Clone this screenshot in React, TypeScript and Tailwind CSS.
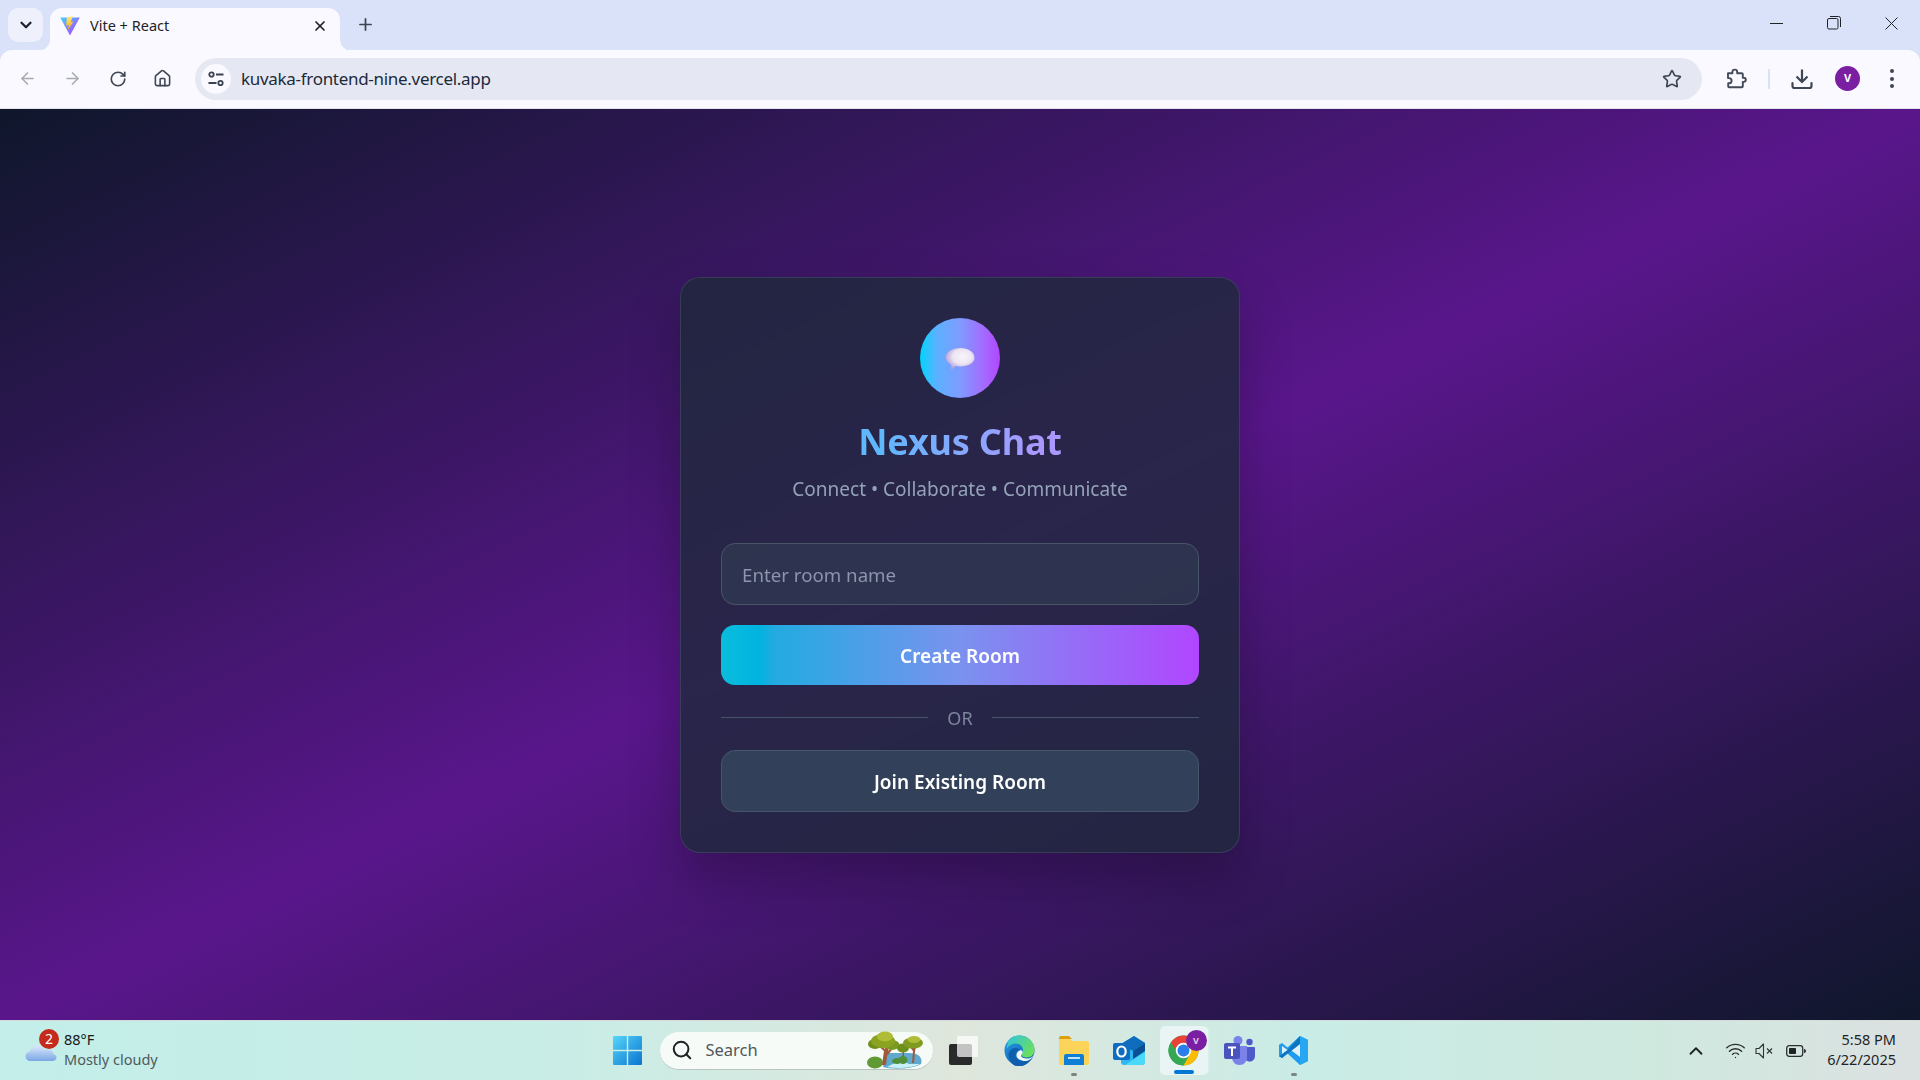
import React from "react";
import { ArrowLeft, ArrowRight, RotateCw, House, Star, X, Plus, ChevronDown, ChevronUp, Wifi, Search } from "lucide-react";

const ui = { fontFamily: '"Noto Sans", "Open Sans", sans-serif' };

function ViteIcon() {
  return (
    <svg width="20" height="20" viewBox="0 0 20 20">
      <defs>
        <linearGradient id="vg" x1="0" y1="0" x2="1" y2="1">
          <stop offset="0" stopColor="#41d1ff" />
          <stop offset="1" stopColor="#bd34fe" />
        </linearGradient>
        <linearGradient id="vb" x1="0" y1="0" x2="0" y2="1">
          <stop offset="0" stopColor="#ffea83" />
          <stop offset="1" stopColor="#ffa800" />
        </linearGradient>
      </defs>
      <path d="M0.2 1.5 L19.8 1.5 L10 19.5 Z" fill="url(#vg)" />
      <path d="M12.8 0 L6.8 1.6 L6.2 9.5 L8.8 9 L7.8 14 L13.5 5.5 L10.8 6 Z" fill="url(#vb)" />
    </svg>
  );
}

function TuneIcon() {
  return (
    <svg width="18" height="18" viewBox="0 0 18 18" fill="none" stroke="#3c4350" strokeWidth="1.8">
      <circle cx="4.5" cy="4.5" r="2.2" />
      <path d="M9 4.5h7.5M1.5 13h8" />
      <circle cx="13.5" cy="13" r="2.2" />
    </svg>
  );
}

function PuzzleIcon() {
  return (
    <svg width="21" height="21" viewBox="0 0 21 21" fill="none" stroke="#444a57" strokeWidth="1.9" strokeLinejoin="round">
      <path d="M2 5.2h4.4V4a2.4 2.4 0 0 1 4.8 0v1.2h4.6a1 1 0 0 1 1 1v3.5h.9a2.1 2.1 0 0 1 0 4.2h-.9v4.4a1 1 0 0 1-1 1H3.2a1 1 0 0 1-1-1v-3h.8a2.6 2.6 0 0 0 0-5.2h-1V5.2Z" />
    </svg>
  );
}

function DownloadIcon() {
  return (
    <svg width="22" height="22" viewBox="0 0 22 22" fill="none" stroke="#3f4654" strokeWidth="2.2">
      <path d="M11 1.5v12M5.5 8.5 11 14l5.500-5.500" />
      <path d="M1.500 15v3a2 2 0 0 0 2 2h15a2 2 0 0 0 2-2v-3" strokeLinecap="round" />
    </svg>
  );
}

function Bubble() {
  return (
    <svg width="30" height="24" viewBox="0 0 30 24">
      <defs>
        <radialGradient id="bub" cx="0.58" cy="0.4" r="0.6">
          <stop offset="0" stopColor="#f8f4fb" />
          <stop offset="0.55" stopColor="#ece5f3" />
          <stop offset="1" stopColor="#b8a0d8" />
        </radialGradient>
      </defs>
      <path d="M15.500 1C23 1 29.500 5 29.500 10.500C29.500 15.800 23.500 19.500 15.500 19.500C13.500 19.500 11.800 19.300 10.300 18.800C9.300 20.300 7.800 22 6.300 22.800C6.200 21 6.200 19 6 17.300C2.800 15.600 .7 13.300 .7 10.500C.7 5 8 1 15.500 1Z" fill="url(#bub)" />
    </svg>
  );
}

function Weather() {
  return (
    <div className="relative w-[39px] h-[44px] -mt-[4px]">
      <svg className="absolute left-0 top-[10px]" width="32" height="26" viewBox="0 0 32 26">
        <defs>
          <linearGradient id="cl" x1="0" y1="0" x2="0" y2="1">
            <stop offset="0" stopColor="#dbe8fa" />
            <stop offset="1" stopColor="#7ba7e6" />
          </linearGradient>
        </defs>
        <path d="M25 4 l4 5 -5 3Z" fill="#f0962a" />
        <path d="M6 24c-3.500 0-5.500-2.200-5.500-4.800 0-2.500 1.900-4.400 4.500-4.600C5.700 11 8.800 8.500 12.500 8.500c3.300 0 6 1.800 7 4.500 1-.5 2-.7 3-.7 3 0 5.400 1.900 6 4.600 1.800.4 3 1.800 3 3.500 0 2-1.700 3.600-4 3.600Z" fill="url(#cl)" />
      </svg>
      <div className="absolute left-[14px] top-[2px] w-[20px] h-[20px] rounded-full bg-[#c42b1c] text-white text-[14px] leading-[20px] text-center">2</div>
    </div>
  );
}

function WinLogo() {
  return (
    <svg width="29" height="29" viewBox="0 0 29 29">
      <defs>
        <linearGradient id="win" x1="0" y1="0" x2="1" y2="1">
          <stop offset="0" stopColor="#55d6fb" />
          <stop offset="1" stopColor="#0a74d0" />
        </linearGradient>
      </defs>
      <path d="M1 0h12.800v13.800H0V1a1 1 0 0 1 1-1ZM15.200 0H28a1 1 0 0 1 1 1v12.800H15.200ZM0 15.200h13.800V29H1a1 1 0 0 1-1-1ZM15.200 15.200H29V28a1 1 0 0 1-1 1H15.200Z" fill="url(#win)" />
    </svg>
  );
}

function Trees() {
  return (
    <svg width="56" height="38" viewBox="0 0 56 38">
      <path d="M16 36c10 3 30 2 38-3 2-6-2-11-12-11H18Z" fill="#5fa9cf" />
      <path d="M20 36c7-4 15-7 22-3l11 0c-8 4-21 5-33 3Z" fill="#c9f0f4" />
      <ellipse cx="8" cy="31.500" rx="8" ry="6" fill="#5f9a34" />
      <ellipse cx="30" cy="30" rx="5" ry="3" fill="#4f8f3a" />
      <path d="M15 34 17 20 10 14l2-1 6 5 3-8h2l-2 10 6-6 1 1-8 10-1 9Z" fill="#a0573a" />
      <ellipse cx="8" cy="13" rx="7" ry="5" fill="#6f8f1c" />
      <ellipse cx="25" cy="14" rx="7.500" ry="5" fill="#7b9a1e" />
      <ellipse cx="16" cy="10" rx="12" ry="7" fill="#8aa421" />
      <ellipse cx="18" cy="5.500" rx="8" ry="5" fill="#aebd35" />
      <path d="M45 32 46 20l-5-6 1-1 5 4 2-5h1l-2 8-1 12Z" fill="#a0573a" />
      <path d="M35.500 31V20h1.500v11Z" fill="#a0573a" />
      <ellipse cx="36" cy="29" rx="4.500" ry="4" fill="#4f8f3a" />
      <ellipse cx="36" cy="17" rx="6" ry="4.500" fill="#6f8f1c" />
      <ellipse cx="46" cy="12" rx="10" ry="5.500" fill="#7f9b20" />
      <ellipse cx="47" cy="8.500" rx="6.500" ry="3.500" fill="#aebd35" />
    </svg>
  );
}

function TaskView() {
  return (
    <svg width="29" height="29" viewBox="0 0 29 29">
      <rect x="0" y="8" width="23" height="21" rx="2" fill="#2a2a2a" />
      <rect x="8" y="0" width="22" height="21" rx="2" fill="#ffffff" fillOpacity="0.72" />
    </svg>
  );
}

function Edge() {
  return (
    <svg width="31" height="31" viewBox="0 0 31 31">
      <defs>
        <linearGradient id="eg" x1="0" y1="0" x2="1" y2="0.6">
          <stop offset="0" stopColor="#2fc2e0" />
          <stop offset="1" stopColor="#6bdf5f" />
        </linearGradient>
        <linearGradient id="eb" x1="0" y1="0" x2="0.6" y2="1">
          <stop offset="0" stopColor="#2a9fe6" />
          <stop offset="1" stopColor="#0b5fb5" />
        </linearGradient>
      </defs>
      <circle cx="15.500" cy="15.500" r="15" fill="url(#eb)" />
      <path d="M3 8C6 2.500 11 .5 15.500.5 24 .5 30.500 7 30.500 15c0 4-3 7.500-7.500 7.500-3.500 0-6-1.500-6-3 0-1 2-1.500 2-4.500 0-3.500-3-6.500-7-6.500-4 0-7.500 2-9 5-.3-2 .0-4 1-5.500Z" fill="url(#eg)" />
      <path d="M12 31c-4-1-7.500-6-7.500-11 0-3.500 3-7 7-7 2.500 0 4 1 4.500 2-3 .5-4.500 2.500-4.500 5 0 4 4 6.500 8 6.500 3.500 0 5.500-1 7.500-2.500-3 5-7.500 7.500-11.500 7.500Z" fill="#0f5fae" />
      <path d="M12.500 20.500c0-3 2-5 4.500-5.500 1.500 1 2 2 1.500 3-.5 1-1.500 1.500-1.500 2.500 0 2 3 3 6 3 3.500 0 6.500-2 7.500-5-.2 1.800-3.500 7.500-9 7.500-5 0-9-2.500-9-5.500Z" fill="#f1faf8" />
    </svg>
  );
}

function Folder() {
  return (
    <svg width="30" height="29" viewBox="0 0 30 29">
      <path d="M0 2a2 2 0 0 1 2-2h8l3 3h-13Z" fill="#dd9f0f" />
      <path d="M0 3h11l2 2h15a2 2 0 0 1 2 2v20a2 2 0 0 1-2 2H2a2 2 0 0 1-2-2Z" fill="#fcd45a" />
      <path d="M5 29v-9a2 2 0 0 1 2-2h16a2 2 0 0 1 2 2v9Z" fill="#0f7fd6" />
      <rect x="9" y="21" width="12" height="2" fill="#bfe3fa" />
    </svg>
  );
}

function Outlook() {
  return (
    <svg width="32" height="29" viewBox="0 0 32 29">
      <path d="M8 8 21 0l11 7v19a3 3 0 0 1-3 3H11a3 3 0 0 1-3-3Z" fill="#2eb7f0" />
      <path d="M8 8 21 0l11 7-12 8Z" fill="#0f6cbd" />
      <path d="M32 7v8l-12 8V15Z" fill="#0a4f94" />
      <path d="M12 29 32 16v10a3 3 0 0 1-3 3Z" fill="#4cd8f7" />
      <rect x="0" y="7" width="17" height="17" rx="2" fill="#0f6cc0" />
      <ellipse cx="8.500" cy="15.500" rx="4.200" ry="5" fill="none" stroke="#fff" strokeWidth="2.200" />
    </svg>
  );
}

function ChromeIcon() {
  return (
    <svg width="31" height="31" viewBox="0 0 32 32">
      <circle cx="16" cy="16" r="15.500" fill="#34a853" />
      <path d="M16 .5A15.500 15.500 0 0 1 29.400 8.200L16 8.500 5.500 14 3 8A15.500 15.500 0 0 1 16 .5Z" fill="#ea4335" />
      <path d="M3 7.600 10 19.500 16 31.500A15.500 15.500 0 0 1 3 7.600Z" fill="#34a853" />
      <path d="M29.400 8.200A15.500 15.500 0 0 1 16 31.500L22.500 20V9Z" fill="#fbbc04" />
      <circle cx="16" cy="16" r="8" fill="#ffffff" />
      <circle cx="16" cy="16" r="6.200" fill="#2b7de9" />
    </svg>
  );
}

function Teams() {
  return (
    <svg width="31" height="29" viewBox="0 0 31 29">
      <circle cx="14" cy="4.500" r="4.500" fill="#7b83eb" />
      <circle cx="25.500" cy="6" r="3.200" fill="#5059c9" />
      <path d="M20 11h10a1 1 0 0 1 1 1v8c0 3.500-2.500 5.500-5.500 5.500S20 23 20 20Z" fill="#5059c9" />
      <path d="M8 10h15v11c0 4.500-3 8-7.500 8S8 25.500 8 21Z" fill="#7b83eb" />
      <rect x="0" y="7" width="16" height="16" rx="2" fill="#4b53bc" />
      <path d="M4 10.500h8v2H9v7.500H7v-7.500H4Z" fill="#fff" />
    </svg>
  );
}

function VSCode() {
  return (
    <svg width="29" height="29" viewBox="0 0 29 29">
      <path d="M21 0 29 4v21l-8 4L8.500 17.500 3 22 0 20.300V8.700L3 7l5.500 4.500Z" fill="#1f9cf0" />
      <path d="M21 0 29 4v21l-8 4Z" fill="#27a7f2" />
      <path d="M21 8 12.500 14.500 21 21Z" fill="#f4fafc" fillOpacity="0.9" />
      <path d="M3 10l6.200 4.500L3 19Z" fill="#dff1fb" />
      <path d="M21 0v8L3 22 0 20.300 8.500 14 Z" fill="#0d76c1" />
    </svg>
  );
}

function Sound() {
  return (
    <svg width="20" height="16" viewBox="0 0 20 16" fill="none" stroke="#2e3436" strokeWidth="1.100">
      <path d="M1 5.500h3L8.500 1v14L4 10.500H1Z" strokeLinejoin="round" />
      <path d="M12 5.500l5 5M17 5.500l-5 5" />
    </svg>
  );
}

function Battery() {
  return (
    <svg width="20" height="14" viewBox="0 0 20 14" fill="none">
      <rect x="0.700" y="1.700" width="16" height="10.600" rx="2.500" stroke="#2a2f31" strokeWidth="1.300" />
      <rect x="3" y="4" width="7" height="6" rx="0.800" fill="#1f2324" />
      <path d="M18 5v4a2 2 0 0 0 0-4Z" fill="#2a2f31" />
    </svg>
  );
}

export default function App() {
  return (
    <div className="w-[1920px] h-[1080px] overflow-hidden flex flex-col bg-[#d9e2f8]" style={ui}>
      {/* tab strip */}
      <div className="h-[50px] shrink-0 flex items-end bg-[#d9e2f8] relative">
        <div className="w-[35px] h-[34px] ml-2 mb-2 rounded-[10px] bg-[#eef1fc] flex items-center justify-center">
          <ChevronDown size={18} strokeWidth={3} color="#1f2328" />
        </div>
        <div className="relative w-[290px] h-[43px] ml-[7px] bg-[#f9f9ff] rounded-t-[12px] flex items-center pl-[10px] pr-[12px] pb-[8px] -mb-px">
          <svg className="absolute -left-[12px] bottom-0" width="12" height="12" viewBox="0 0 12 12"><path d="M12 0v12H0A12 12 0 0 0 12 0Z" fill="#f9f9ff" /></svg>
          <svg className="absolute -right-[12px] bottom-0" width="12" height="12" viewBox="0 0 12 12"><path d="M0 0v12h12A12 12 0 0 1 0 0Z" fill="#f9f9ff" /></svg>
          <ViteIcon />
          <span className="ml-[10px] text-[14.500px] text-[#1f2328] leading-none flex-1">Vite + React</span>
          <X size={16} strokeWidth={2.6} color="#1f2328" />
        </div>
        <div className="ml-[13px] mb-[14px] w-6 h-6 flex items-center justify-center">
          <Plus size={19} strokeWidth={2.2} color="#3c4450" />
        </div>
        <div className="flex-1" />
        <div className="flex items-center h-[50px] mb-[2px] pr-[22px] gap-[44px]">
          <div className="w-[13px] h-px bg-[#1f2328]" />
          <svg width="14" height="14" viewBox="0 0 14 14" fill="none" stroke="#1f2328" strokeWidth="1">
            <rect x="0.500" y="2.500" width="10.500" height="10.500" rx="1.500" />
            <path d="M3 .5h8.500a2 2 0 0 1 2 2V11" />
          </svg>
          <svg width="13" height="13" viewBox="0 0 13 13" fill="none" stroke="#1f2328" strokeWidth="1">
            <path d="M.5.5l12 12M12.500.5l-12 12" />
          </svg>
        </div>
      </div>

      {/* toolbar */}
      <div className="h-[59px] shrink-0 bg-[#f9f9ff] rounded-t-[12px] border-b border-[#e2e3ea] flex items-center pl-[5px] pr-[26px] pb-px">
        <div className="w-[45px] flex justify-center"><ArrowLeft size={19} color="#a9abb2" strokeWidth={2} /></div>
        <div className="w-[45px] flex justify-center"><ArrowRight size={19} color="#a9abb2" strokeWidth={2} /></div>
        <div className="w-[45px] flex justify-center"><RotateCw size={18} color="#3f4654" strokeWidth={2.2} /></div>
        <div className="w-[45px] flex justify-center"><House size={19} color="#3f4654" strokeWidth={2} /></div>
        <div className="ml-[10px] flex-1 h-[42px] rounded-full bg-[#e5e8f3] flex items-center pl-[6px] pr-[20px]">
          <div className="w-[30px] h-[30px] rounded-full bg-[#f9f9ff] flex items-center justify-center"><TuneIcon /></div>
          <span className="ml-[10px] text-[17px] text-[#1c2a3a] flex-1 tracking-[-0.3px]">kuvaka-frontend-nine.vercel.app</span>
          <Star size={20} color="#3f4654" strokeWidth={2} />
        </div>
        <div className="w-[66px] shrink-0 flex justify-center pl-[2px]"><PuzzleIcon /></div>
        <div className="w-[2px] h-[20px] shrink-0 bg-[#d5e2f8]" />
        <div className="w-[64px] shrink-0 flex justify-center"><DownloadIcon /></div>
        <div className="w-[25px] h-[25px] shrink-0 rounded-full bg-[#7a1fa2] text-white text-[11px] font-bold flex items-center justify-center ml-px">V</div>
        <div className="ml-[30px] shrink-0 flex flex-col gap-[3.500px]">
          <span className="w-[4px] h-[4px] rounded-full bg-[#3f4654]" />
          <span className="w-[4px] h-[4px] rounded-full bg-[#3f4654]" />
          <span className="w-[4px] h-[4px] rounded-full bg-[#3f4654]" />
        </div>
      </div>

      {/* page */}
      <main className="flex-1 flex items-center justify-center bg-[linear-gradient(to_bottom_right,#0f172b_0%,#59168b_50%,#0f172b_100%)]">
        <div className="w-[560px] h-[576px] rounded-[20px] border border-[#475569]/50 bg-[#1e293b]/80 backdrop-blur-md p-10 shadow-[0_25px_50px_rgba(0,0,0,0.25)]">
          <div className="w-20 h-20 mx-auto pt-[2px] rounded-full bg-[linear-gradient(90deg,#00d4ff_0%,#5ab2ff_20%,#7f9bff_50%,#a46aff_80%,#b146ff_100%)] flex items-center justify-center">
            <Bubble />
          </div>
          <h1 className="mt-[22px] text-[36px] leading-[44px] tracking-[-0.2px] font-bold text-center text-transparent bg-clip-text bg-[linear-gradient(90deg,#5fb8fc_33%,#ab98ff_67%)]">Nexus Chat</h1>
          <p className="mt-[13px] text-[19px] leading-[24px] text-[#94a3b8] text-center">Connect • Collaborate • Communicate</p>
          <input
            readOnly
            placeholder="Enter room name"
            className="mt-[42px] block w-full h-[62px] px-5 pt-px rounded-[14px] border border-[#475569] bg-[#334155]/50 text-[18.700px] outline-none placeholder:text-[#8b95ab]"
          />
          <button className="mt-[20px] block w-full h-[60px] pt-[3px] rounded-[14px] text-white text-[19px] font-semibold bg-[linear-gradient(90deg,#0abcdc_0%,#00b4e0_8%,#22abe0_11%,#7a92ee_50%,#b146ff_100%)]">Create Room</button>
          <div className="mt-[22px] flex items-center h-[22px]">
            <div className="flex-1 h-px bg-[#475569]" />
            <span className="w-[64px] text-center text-[18px] text-[#7c859c] leading-none">OR</span>
            <div className="flex-1 h-px bg-[#475569]" />
          </div>
          <button className="mt-[21px] block w-full h-[62px] pt-[3px] rounded-[14px] border border-[#475569] bg-[#324159] text-white text-[19px] font-semibold">Join Existing Room</button>
        </div>
      </main>

      {/* taskbar */}
      <div className="h-[60px] shrink-0 border-t border-[#d5dbdb] grid grid-cols-[1fr_auto_1fr] items-center bg-[linear-gradient(90deg,#c3eee9_0%,#c9ede6_30%,#dfe6dc_50%,#c9ece6_68%,#cfe9df_86%,#dce1e1_100%)]">
        <div className="flex items-center pl-[25px]">
          <Weather />
          <div className="flex flex-col pb-[4px]">
            <span className="text-[14.500px] leading-[20px] text-[#15191a]">88°F</span>
            <span className="text-[14.500px] leading-[20px] text-[#4f5a5c]">Mostly cloudy</span>
          </div>
        </div>

        <div className="flex items-center">
          <WinLogo />
          <div className="ml-[18px] w-[273px] h-[38px] rounded-full bg-[#f7fbf8] border-b border-[#b9c4c0] flex items-center pl-[11px] pr-[10px]">
            <Search size={22} strokeWidth={2.2} color="#1f2324" />
            <span className="ml-[13px] flex-1 text-[16.500px] text-[#50585a]">Search</span>
            <Trees />
          </div>
          <div className="ml-4"><TaskView /></div>
          <div className="ml-[26px]"><Edge /></div>
          <div className="relative ml-[24px] w-[30px]">
            <Folder />
            <span className="absolute left-[12px] top-[37px] w-[6px] h-[3px] rounded-full bg-[#7b8484]" />
          </div>
          <div className="ml-[24px]"><Outlook /></div>
          <div className="relative ml-[15px] w-[48px] h-[49px] rounded-[5px] bg-[#e8f5f4] flex justify-center pt-[9px] shadow-[3px_0_0_-1px_#d8ecea]">
            <ChromeIcon />
            <span className="absolute right-[1px] top-[4px] w-[21px] h-[21px] rounded-full bg-[#7a1fa2] text-[#e3c8ee] text-[9px] font-bold leading-[21px] text-center">V</span>
            <span className="absolute left-[14px] bottom-[1px] w-[20px] h-[4px] rounded-full bg-[#0078d4]" />
          </div>
          <div className="ml-4"><Teams /></div>
          <div className="relative ml-[24px] w-[29px]">
            <VSCode />
            <span className="absolute left-[12px] top-[37px] w-[6px] h-[3px] rounded-full bg-[#7b8484]" />
          </div>
        </div>

        <div className="flex items-center justify-end pr-[24px]">
          <ChevronUp size={22} strokeWidth={2} color="#1f2324" />
          <Wifi size={21} strokeWidth={1.600} color="#2a2f31" className="ml-[18px]" />
          <div className="ml-[9px]"><Sound /></div>
          <div className="ml-[11px]"><Battery /></div>
          <div className="ml-[21px] pb-[3px] flex flex-col items-end text-[14.500px] leading-[20px] text-[#1f2426]">
            <span>5:58 PM</span>
            <span>6/22/2025</span>
          </div>
        </div>
      </div>
    </div>
  );
}
